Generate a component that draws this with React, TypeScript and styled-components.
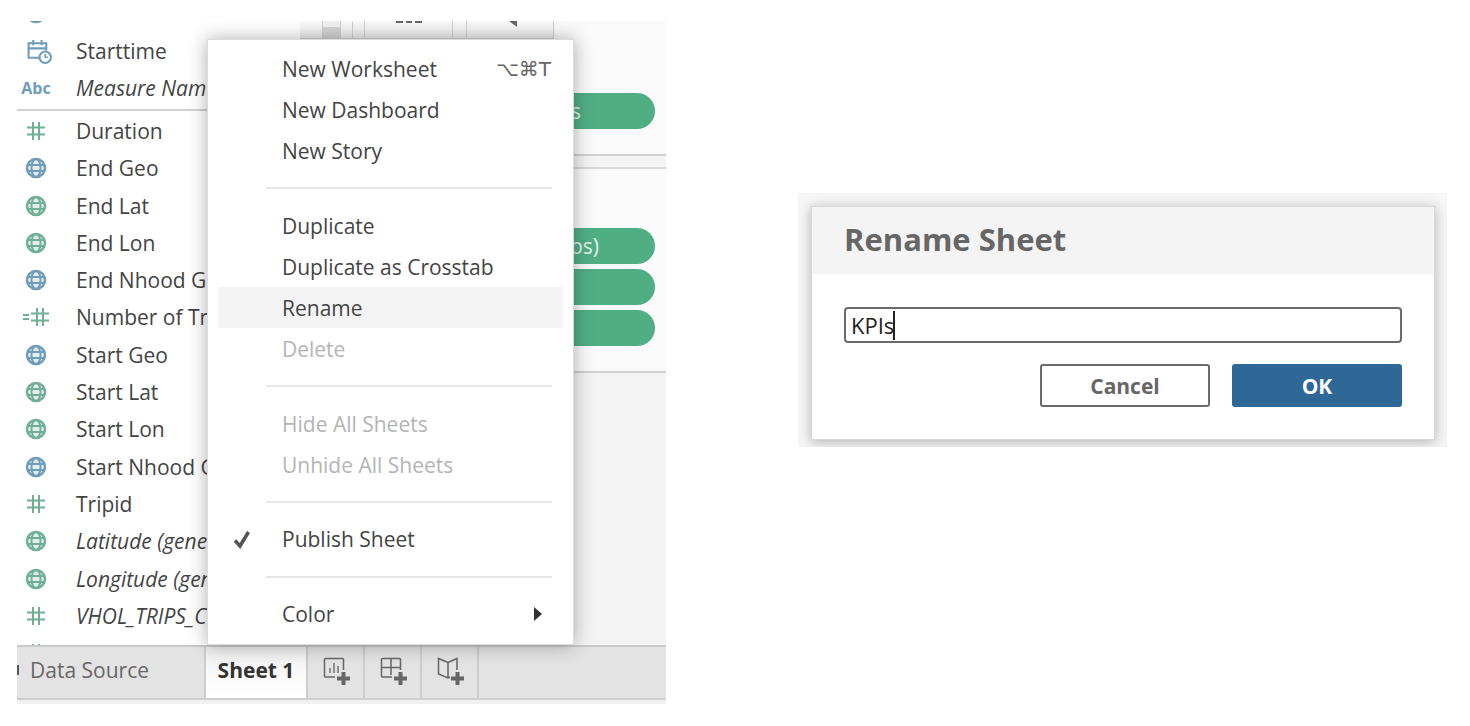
import React from 'react';
import styled, { createGlobalStyle } from 'styled-components';

const UI_FONT = `'Open Sans', 'Noto Sans', 'Liberation Sans', sans-serif`;
const BLUE = '#6d9dbb';
const GREEN = '#6fb094';

const GlobalStyle = createGlobalStyle`
  html, body {
    margin: 0;
    padding: 0;
    background: #fff;
  }
  * {
    box-sizing: border-box;
  }
`;

const Canvas = styled.div`
  width: 1470px;
  height: 726px;
  overflow: hidden;
  display: flex;
  align-items: flex-start;
  font-family: ${UI_FONT};
  background: #fff;
`;

const AppWindow = styled.div`
  position: relative;
  flex: none;
  width: 649px;
  height: 683px;
  margin: 21px 0 0 17px;
  display: flex;
  flex-direction: column;
  overflow: hidden;
`;

const Workspace = styled.div`
  flex: none;
  height: 624px;
  display: flex;
  overflow: hidden;
`;

const DataPane = styled.div`
  flex: none;
  width: 283px;
  margin-top: -26.4px;
  background: #fff;
`;

const FieldRow = styled.div`
  height: 37.33px;
  display: flex;
  align-items: center;
  white-space: nowrap;
  font-size: 21px;
  color: #444;
`;

const FieldIcon = styled.span`
  flex: none;
  width: 38px;
  margin-right: 21px;
  display: flex;
  justify-content: center;
  align-items: center;
`;

const FieldName = styled.span<{ $italic?: boolean }>`
  font-style: ${(p) => (p.$italic ? 'italic' : 'normal')};
`;

const AbcBadge = styled.span`
  font-size: 16px;
  font-weight: 700;
  color: ${BLUE};
`;

const FieldDivider = styled.div`
  height: 5.6px;
  padding-top: 2px;

  &::after {
    content: '';
    display: block;
    height: 2px;
    background: #d2d2d2;
  }
`;

const ShelfColumn = styled.div`
  flex: 1;
  min-width: 0;
  display: flex;
  flex-direction: column;
  background: #f3f3f3;
`;

const Toolbar = styled.div`
  flex: none;
  height: 18px;
  display: flex;
  background: #fafafa;
`;

const ToolbarCell = styled.div<{ $width: number; $pressed?: boolean }>`
  position: relative;
  flex: none;
  width: ${(p) => p.$width}px;
  border-right: 1px solid #cfcfcf;
  border-bottom: 1px solid #d4d4d4;
  background: ${(p) =>
    p.$pressed
      ? 'linear-gradient(#f0f0f0 0 35%, #d4d4d4 35%)'
      : 'linear-gradient(#fafafa, #ececec)'};
`;

const ToolbarGlyph = styled.svg<{ $left: number }>`
  position: absolute;
  top: 0;
  left: ${(p) => p.$left}px;
`;

const Shelf = styled.div<{ $height: number; $pillsTop: number }>`
  flex: none;
  height: ${(p) => p.$height}px;
  padding: ${(p) => p.$pillsTop}px 11px 0 0;
  display: flex;
  flex-direction: column;
  gap: 5px;
  background: #fafafa;
  border-bottom: 2px solid #d0d0d0;
`;

const ShelfGap = styled.div`
  flex: none;
  height: 13px;
  background: #f4f4f4;
  border-bottom: 2px solid #d8d8d8;
`;

const Pill = styled.div<{ $inset: number }>`
  height: 36px;
  padding-right: ${(p) => p.$inset}px;
  display: flex;
  align-items: center;
  justify-content: flex-end;
  white-space: nowrap;
  overflow: hidden;
  border-radius: 18px;
  background: #50ae85;
  color: #e3f1ea;
  font-size: 21px;
`;

const TabBar = styled.div`
  flex: none;
  height: 55px;
  display: flex;
  background: #e3e3e3;
  border-top: 2px solid #c9c9c9;
  border-bottom: 2px solid #cfcfcf;
`;

const DataSourceTab = styled.div`
  flex: none;
  width: 189px;
  padding-bottom: 5px;
  display: flex;
  align-items: center;
  gap: 11px;
  font-size: 21px;
  color: #666;
  border-right: 2px solid #cdcdcd;
`;

const ClippedGlyph = styled.span`
  flex: none;
  width: 2px;
  height: 10px;
  background: #555;
`;

const SheetTab = styled.div`
  flex: none;
  width: 102px;
  padding-bottom: 5px;
  display: flex;
  align-items: center;
  justify-content: center;
  font-size: 21px;
  font-weight: 700;
  color: #333;
  background: linear-gradient(#ececec, #fafafa 50%, #fff);
  border-right: 2px solid #cdcdcd;
`;

const NewTabButton = styled.div`
  flex: none;
  width: 57px;
  display: flex;
  align-items: center;
  padding-left: 15px;
  border-right: 2px solid #cdcdcd;
`;

const BottomStrip = styled.div`
  flex: none;
  height: 4px;
  background: #f1f1f1;
`;

const Menu = styled.div`
  position: absolute;
  left: 190px;
  top: 18px;
  width: 367px;
  height: 606px;
  padding: 8.5px 10px;
  background: #fff;
  border: 1px solid #dcdcdc;
  box-shadow: 0 0 18px rgba(0, 0, 0, 0.32);
`;

const MenuItem = styled.div<{ $active?: boolean; $disabled?: boolean }>`
  position: relative;
  height: 41px;
  padding: 0 12px 0 64px;
  display: flex;
  align-items: center;
  justify-content: space-between;
  font-size: 21px;
  color: ${(p) => (p.$disabled ? '#b4b4b4' : '#444')};
  background: ${(p) => (p.$active ? '#f4f4f4' : 'transparent')};
`;

const MenuDivider = styled.div`
  height: 33.8px;
  margin: 0 11px 0 48px;
  display: flex;
  align-items: center;

  &::after {
    content: '';
    flex: 1;
    height: 2px;
    background: #e6e6e6;
  }
`;

const Shortcut = styled.span`
  font-family: 'DejaVu Sans', ${UI_FONT};
  font-size: 20px;
  color: #666;
`;

const CheckMark = styled.svg`
  position: absolute;
  left: 15px;
  top: 11px;
`;

const SubmenuArrow = styled.span`
  width: 0;
  height: 0;
  margin-right: 9px;
  border-left: 8px solid #333;
  border-top: 7px solid transparent;
  border-bottom: 7px solid transparent;
`;

const DialogFrame = styled.div`
  flex: none;
  width: 649px;
  height: 254px;
  margin: 193px 0 0 132px;
  padding: 13px 12px 0 13px;
  overflow: hidden;
  background: #f6f6f6;
`;

const Dialog = styled.div`
  width: 624px;
  height: 234px;
  background: #fff;
  border: 1px solid #d8d8d8;
  box-shadow: 0 2px 12px rgba(0, 0, 0, 0.28);
`;

const DialogHeader = styled.div`
  height: 67px;
  padding: 0 0 4px 32px;
  display: flex;
  align-items: center;
  background: #f4f4f4;
  font-size: 31px;
  font-weight: 700;
  color: #666;
`;

const DialogBody = styled.div`
  padding: 33px 32px 0;
`;

const NameField = styled.div`
  height: 36px;
  padding-left: 5px;
  display: flex;
  align-items: center;
  border: 2px solid #6b6b6b;
  border-radius: 4px;
  font-size: 22px;
  color: #222;
`;

const Caret = styled.span`
  width: 2px;
  height: 29px;
  margin-left: -1px;
  background: #222;
`;

const DialogActions = styled.div`
  margin-top: 21px;
  display: flex;
  justify-content: flex-end;
  gap: 22px;
`;

const DialogButton = styled.div<{ $primary?: boolean }>`
  width: 170px;
  height: 43px;
  display: flex;
  align-items: center;
  justify-content: center;
  border-radius: 3px;
  font-size: 21px;
  font-weight: 700;
  color: ${(p) => (p.$primary ? '#fff' : '#666')};
  background: ${(p) => (p.$primary ? '#2f6797' : '#fff')};
  border: 2px solid ${(p) => (p.$primary ? '#2f6797' : '#6b6b6b')};
`;

const CalendarSvg = styled.svg`
  margin: 1px 0 0 6px;
`;

const CalendarIcon = () => (
  <CalendarSvg width="27" height="27" viewBox="0 0 26 26" fill="none" stroke={BLUE} strokeWidth="2">
    <path d="M14 19H2.500V5h17v7" />
    <path d="M2.500 10h17M7 2v5M15 2v5" />
    <circle cx="18.500" cy="18.500" r="5.500" fill="#fff" />
    <path d="M18.500 15.500v3h2.500" strokeWidth="1.600" />
  </CalendarSvg>
);

const HashIcon = () => (
  <svg width="20" height="20" viewBox="0 0 20 20" stroke={GREEN} strokeWidth="2">
    <path d="M7 1v18M13 1v18M1 6.500h18M1 13.500h18" />
  </svg>
);

const CountIcon = () => (
  <svg width="28" height="20" viewBox="0 0 28 20" stroke={GREEN} strokeWidth="2">
    <path d="M1 8h6M1 12h6M15 1v18M21 1v18M9 6.500h18M9 13.500h18" />
  </svg>
);

const GlobeIcon = ({ color }: { color: string }) => (
  <svg width="22" height="22" viewBox="0 0 22 22" fill="none" stroke={color} strokeWidth="2">
    <circle cx="11" cy="11" r="9" fill="#e4eeee" strokeWidth="2.500" />
    <ellipse cx="11" cy="11" rx="4.500" ry="9" />
    <path d="M2 8h18M2 14h18" />
  </svg>
);

const PlusMark = () => <path d="M14 22.500h13M20.500 16v13" stroke="#666" strokeWidth="4" />;

const NewWorksheetIcon = () => (
  <svg width="30" height="34" viewBox="0 0 30 34" fill="none" stroke="#666" strokeWidth="1.500">
    <path d="M12 21H2.500a1 1 0 0 1-1-1V3.500a1 1 0 0 1 1-1h17a1 1 0 0 1 1 1V14" />
    <path d="M7 12v5M11 7v10M15 10v7" strokeWidth="1.300" />
    <PlusMark />
  </svg>
);

const NewDashboardIcon = () => (
  <svg width="30" height="34" viewBox="0 0 30 34" fill="none" stroke="#666" strokeWidth="1.500">
    <path d="M12 21H2.500a1 1 0 0 1-1-1V3.500a1 1 0 0 1 1-1h17a1 1 0 0 1 1 1V14" />
    <path d="M1.500 11.500h19M11 2.500V19" />
    <PlusMark />
  </svg>
);

const NewStoryIcon = () => (
  <svg width="30" height="34" viewBox="0 0 30 34" fill="none" stroke="#666" strokeWidth="1.500">
    <path d="M11 6.500 1.500 2.500V18l9.500 4 2-1M11 6.500l9-4V14M11 6.500V22" />
    <PlusMark />
  </svg>
);

type Field = { name: string; icon: React.ReactNode; italic?: boolean };

const dimensionFields: Field[] = [
  { name: 'Start Station Name', icon: <GlobeIcon color={BLUE} /> },
  { name: 'Starttime', icon: <CalendarIcon /> },
  { name: 'Measure Names', icon: <AbcBadge>Abc</AbcBadge>, italic: true },
];

const measureFields: Field[] = [
  { name: 'Duration', icon: <HashIcon /> },
  { name: 'End Geo', icon: <GlobeIcon color={BLUE} /> },
  { name: 'End Lat', icon: <GlobeIcon color={GREEN} /> },
  { name: 'End Lon', icon: <GlobeIcon color={GREEN} /> },
  { name: 'End Nhood Geo', icon: <GlobeIcon color={BLUE} /> },
  { name: 'Number of Trips', icon: <CountIcon /> },
  { name: 'Start Geo', icon: <GlobeIcon color={BLUE} /> },
  { name: 'Start Lat', icon: <GlobeIcon color={GREEN} /> },
  { name: 'Start Lon', icon: <GlobeIcon color={GREEN} /> },
  { name: 'Start Nhood Geo', icon: <GlobeIcon color={BLUE} /> },
  { name: 'Tripid', icon: <HashIcon /> },
  { name: 'Latitude (generated)', icon: <GlobeIcon color={GREEN} />, italic: true },
  { name: 'Longitude (generated)', icon: <GlobeIcon color={GREEN} />, italic: true },
  { name: 'VHOL_TRIPS_COUNT', icon: <HashIcon />, italic: true },
  { name: '', icon: <HashIcon /> },
];

const FieldRows = ({ fields }: { fields: Field[] }) => (
  <>
    {fields.map((field, i) => (
      <FieldRow key={i}>
        <FieldIcon>{field.icon}</FieldIcon>
        <FieldName $italic={field.italic}>{field.name}</FieldName>
      </FieldRow>
    ))}
  </>
);

const App = () => {
  return (
    <Canvas>
      <GlobalStyle />
      <AppWindow>
        <Workspace>
          <DataPane>
            <FieldRows fields={dimensionFields} />
            <FieldDivider />
            <FieldRows fields={measureFields} />
          </DataPane>
          <ShelfColumn>
            <Toolbar>
              <ToolbarCell $width={23} />
              <ToolbarCell $width={18} $pressed />
              <ToolbarCell $width={12} />
              <ToolbarCell $width={12} />
              <ToolbarCell $width={88}>
                <ToolbarGlyph $left={31} width="26" height="3" viewBox="0 0 26 3" fill="#666">
                  <path d="M0 0h7v2H0zM10 0h6v2h-6zM19 0h7v2h-7z" />
                </ToolbarGlyph>
              </ToolbarCell>
              <ToolbarCell $width={14} />
              <ToolbarCell $width={87}>
                <ToolbarGlyph $left={42} width="8" height="6" viewBox="0 0 8 6" fill="#666">
                  <path d="M0 0h4l4 0v6z" />
                </ToolbarGlyph>
              </ToolbarCell>
            </Toolbar>
            <Shelf $height={117} $pillsTop={54}>
              <Pill $inset={74}>Names</Pill>
            </Shelf>
            <ShelfGap />
            <Shelf $height={204} $pillsTop={59}>
              <Pill $inset={56}>Trips)</Pill>
              <Pill $inset={56} />
              <Pill $inset={56} />
            </Shelf>
          </ShelfColumn>
        </Workspace>
        <TabBar>
          <DataSourceTab>
            <ClippedGlyph />
            Data Source
          </DataSourceTab>
          <SheetTab>Sheet 1</SheetTab>
          <NewTabButton>
            <NewWorksheetIcon />
          </NewTabButton>
          <NewTabButton>
            <NewDashboardIcon />
          </NewTabButton>
          <NewTabButton>
            <NewStoryIcon />
          </NewTabButton>
        </TabBar>
        <BottomStrip />
        <Menu>
          <MenuItem>
            New Worksheet
            <Shortcut>⌥⌘T</Shortcut>
          </MenuItem>
          <MenuItem>New Dashboard</MenuItem>
          <MenuItem>New Story</MenuItem>
          <MenuDivider />
          <MenuItem>Duplicate</MenuItem>
          <MenuItem>Duplicate as Crosstab</MenuItem>
          <MenuItem $active>Rename</MenuItem>
          <MenuItem $disabled>Delete</MenuItem>
          <MenuDivider />
          <MenuItem $disabled>Hide All Sheets</MenuItem>
          <MenuItem $disabled>Unhide All Sheets</MenuItem>
          <MenuDivider />
          <MenuItem>
            <CheckMark width="18" height="19" viewBox="0 0 18 19" fill="none" stroke="#555" strokeWidth="3.500">
              <path d="M2 10.500 7 16 15.500 2" />
            </CheckMark>
            Publish Sheet
          </MenuItem>
          <MenuDivider />
          <MenuItem>
            Color
            <SubmenuArrow />
          </MenuItem>
        </Menu>
      </AppWindow>
      <DialogFrame>
        <Dialog>
          <DialogHeader>Rename Sheet</DialogHeader>
          <DialogBody>
            <NameField>
              KPIs
              <Caret />
            </NameField>
            <DialogActions>
              <DialogButton>Cancel</DialogButton>
              <DialogButton $primary>OK</DialogButton>
            </DialogActions>
          </DialogBody>
        </Dialog>
      </DialogFrame>
    </Canvas>
  );
};

export default App;
